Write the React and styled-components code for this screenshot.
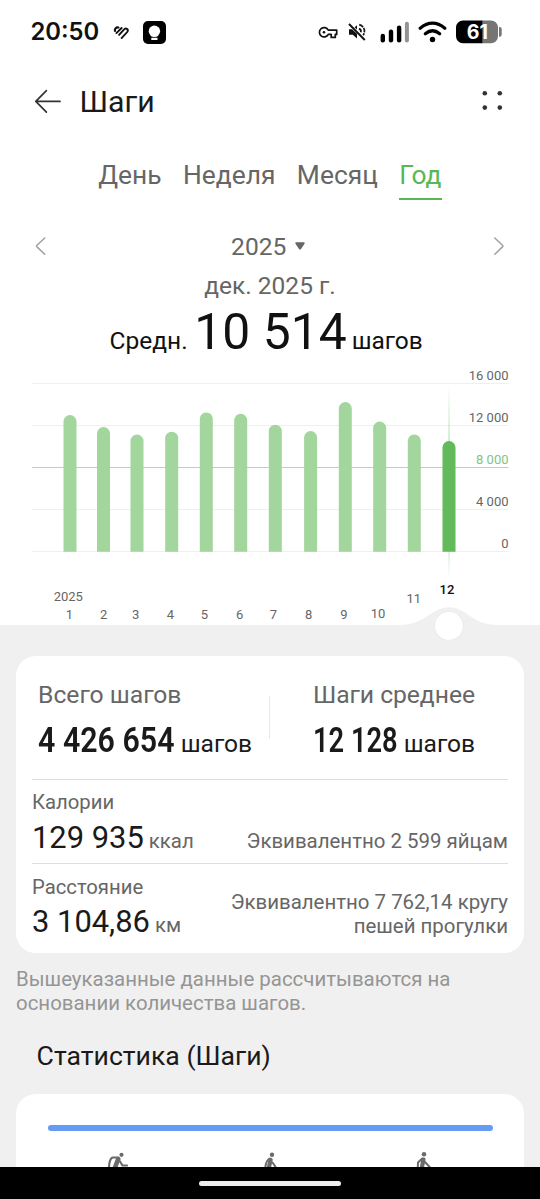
import React from "react";
import styled, { createGlobalStyle } from "styled-components";

const GlobalStyle = createGlobalStyle`
  * {
    box-sizing: border-box;
  }
  body {
    margin: 0;
    background: #f0f0f0;
    font-family: Roboto, "Noto Sans", sans-serif;
  }
`;

const Screen = styled.div`
  display: flex;
  flex-direction: column;
  width: 540px;
  height: 1199px;
  overflow: hidden;
  background: #f0f0f0;
`;

const Content = styled.div`
  flex: 1;
  min-height: 0;
  overflow: hidden;
`;

const TopPanel = styled.div`
  background: #fff;
`;

const StatusBar = styled.div`
  display: flex;
  align-items: center;
  height: 64px;
  padding: 0 38px 0 30.5px;
`;

const Clock = styled.span`
  width: 82px;
  font: 600 23.8px/30px Inter, sans-serif;
  color: #111;
`;

const StatusIcons = styled.div`
  display: flex;
  align-items: center;
  margin-left: auto;
`;

const StatusIcon = styled.svg`
  display: block;
  flex: none;
  margin-left: ${(p) => p.$gap || 0}px;
`;

const TitleBar = styled.div`
  display: flex;
  align-items: center;
  height: 76px;
  padding: 0 36px 0 34px;
`;

const Title = styled.h1`
  margin: 0 auto 0 17.5px;
  font-size: 30.3px;
  font-weight: 400;
  line-height: 40px;
  color: #1a1a1a;
`;

const Tabs = styled.div`
  display: flex;
  gap: 21.4px;
  height: 61px;
  padding: 19px 0 0 98.2px;
`;

const Tab = styled.div`
  height: 41px;
  font-size: 26.4px;
  line-height: 32px;
  color: ${(p) => (p.$active ? "#59b853" : "#666")};
  border-bottom: ${(p) => (p.$active ? "2px solid #59b853" : "none")};
`;

const YearRow = styled.div`
  display: flex;
  align-items: center;
  justify-content: space-between;
  height: 44px;
  margin-top: 24px;
  padding: 0 35px;
`;

const Year = styled.div`
  display: flex;
  align-items: center;
  gap: 9px;
  margin: 0 3.5px 1px 0;
  font-size: 24.6px;
  color: #666;
`;

const Period = styled.div`
  font-size: 24.5px;
  line-height: 34px;
  text-align: center;
  color: #666;
`;

const Average = styled.div`
  display: flex;
  align-items: baseline;
  height: 57px;
  padding-left: 109.6px;
  font-size: 24.5px;
  line-height: 58px;
  color: #111;
`;

const AverageValue = styled.span`
  margin: 0 5px 0 6.7px;
  font-size: 49.8px;
`;

const ChartSvg = styled.svg`
  display: block;
  text {
    font-family: Roboto, sans-serif;
    font-size: 13px;
    fill: #666;
  }
`;

const Card = styled.div`
  margin: 16px 16px 0;
  padding: 0 16px;
  height: ${(p) => p.$height}px;
  background: #fff;
  border-radius: 20px;
`;

const Totals = styled.div`
  display: flex;
  height: 124px;
  padding-top: 24px;
  border-bottom: 1px solid #dedede;
`;

const Total = styled.div`
  width: ${(p) => p.$width}px;
  padding-left: 6px;
`;

const TotalLabel = styled.div`
  font-size: 24.7px;
  line-height: 30px;
  letter-spacing: ${(p) => p.$spacing || 0}px;
  color: #666;
`;

const TotalValue = styled.div`
  display: flex;
  align-items: baseline;
  margin-top: 7.5px;
  font-size: 24.6px;
  line-height: 44px;
  color: #1a1a1a;
`;

const Condensed = styled.span`
  display: block;
  width: ${(p) => p.$width}px;
  font-size: 34.5px;
  font-weight: 600;
  white-space: nowrap;
  transform: scaleX(${(p) => p.$scale});
  transform-origin: left;
`;

const Separator = styled.div`
  width: 1px;
  height: 43px;
  margin: 16px 37px 0 0;
  background: #e8e8e8;
`;

const MetricRow = styled.div`
  display: flex;
  justify-content: space-between;
  align-items: flex-end;
  height: 84px;
  padding-bottom: ${(p) => (p.$last ? 8 : 7.5)}px;
  border-bottom: ${(p) => (p.$last ? "none" : "1px solid #dedede")};
`;

const MetricLabel = styled.div`
  margin-bottom: 5.5px;
  font-size: 20.3px;
  line-height: 24px;
  color: #666;
`;

const MetricValue = styled.div`
  display: flex;
  align-items: baseline;
  height: 36px;
  font-size: 30.9px;
  line-height: 36px;
  color: #1a1a1a;
`;

const Unit = styled.span`
  margin-left: 5px;
  font-size: 20.4px;
  color: #666;
`;

const Equivalent = styled.div`
  padding-bottom: 2.4px;
  font-size: 20.45px;
  line-height: 24px;
  text-align: right;
  color: #666;
`;

const Note = styled.p`
  margin: 14px 16px 0;
  font-size: 20.45px;
  line-height: 24px;
  color: #959595;
`;

const SectionTitle = styled.h2`
  margin: 25px 0 21.5px 36.6px;
  font-size: 26.6px;
  font-weight: 400;
  line-height: 32px;
  color: #1a1a1a;
`;

const ProgressCard = styled(Card)`
  padding-top: 31.5px;
`;

const ProgressBar = styled.div`
  height: 5.5px;
  margin: 0 15.5px;
  border-radius: 3px;
  background: #659bf5;
`;

const Walkers = styled.div`
  display: flex;
  justify-content: space-between;
  padding: 20px 69px 0 70px;
`;

const NavBar = styled.div`
  display: flex;
  justify-content: center;
  height: 32px;
  padding-top: 14px;
  background: #000;
`;

const NavPill = styled.div`
  width: 142px;
  height: 5px;
  border-radius: 3px;
  background: #ededed;
`;

const months = [
  { label: "1", x: 70, top: 415, lx: 69.3 },
  { label: "2", x: 103.5, top: 427, lx: 103.7 },
  { label: "3", x: 137, top: 434.5, lx: 135.7 },
  { label: "4", x: 171.7, top: 431.7, lx: 170.3 },
  { label: "5", x: 206.3, top: 412.4, lx: 204.3 },
  { label: "6", x: 240.7, top: 413.8, lx: 239.7 },
  { label: "7", x: 275.3, top: 424.7, lx: 273.5 },
  { label: "8", x: 310.6, top: 431, lx: 308.7 },
  { label: "9", x: 345.3, top: 402, lx: 344 },
  { label: "10", x: 379.7, top: 421.6, lx: 378, ly: 618 },
  { label: "11", x: 414.3, top: 434.4, lx: 413.7, ly: 603.4 },
  { label: "12", x: 449, top: 441, lx: 447, ly: 594, active: true },
];

const levels = [
  { label: "16 000", y: 383.5 },
  { label: "12 000", y: 425.5 },
  { label: "8 000", y: 467.5, goal: true },
  { label: "4 000", y: 509.5 },
  { label: "0", y: 551.5 },
];

function barPath(x, top) {
  const l = x - 6.5;
  const r = x + 6.5;
  return `M${l} 551.8V${top + 6.5}A6.5 6.5 0 0 1 ${r} ${top + 6.5}V551.8Z`;
}

function StepsChart() {
  return (
    <ChartSvg width="540" height="280" viewBox="0 360 540 280">
      <defs>
        <linearGradient id="marker" x1="0" y1="0" x2="0" y2="1">
          <stop offset="0" stopColor="#5fba59" stopOpacity="0" />
          <stop offset="0.35" stopColor="#5fba59" stopOpacity="0.4" />
          <stop offset="0.75" stopColor="#5fba59" stopOpacity="0.4" />
          <stop offset="1" stopColor="#5fba59" stopOpacity="0" />
        </linearGradient>
        <filter id="knobShadow" x="-30%" y="-30%" width="160%" height="160%">
          <feDropShadow dx="0" dy="0.5" stdDeviation="1" floodOpacity="0.06" />
        </filter>
      </defs>
      {levels.map((l) => (
        <g key={l.label}>
          <path d={`M32 ${l.y}H508.5`} stroke={l.goal ? "#b3d8b0" : "#efefef"} />
          <text x="508.5" y={l.y - 3.8} textAnchor="end" style={l.goal ? { fill: "#85c281" } : null}>
            {l.label}
          </text>
        </g>
      ))}
      <rect x="448.2" y="384" width="1.6" height="196" fill="url(#marker)" />
      {months.map((m) => (
        <path key={m.label} d={barPath(m.x, m.top)} fill={m.active ? "#62ba5b" : "#a2d69d"} />
      ))}
      <text x="68.3" y="601" textAnchor="middle">2025</text>
      {months.map((m) => (
        <text
          key={m.label}
          x={m.lx}
          y={m.ly || 619}
          textAnchor="middle"
          style={m.active ? { fill: "#111", fontWeight: 500 } : null}
        >
          {m.label}
        </text>
      ))}
      <path
        d="M0 625H400C426 625 431 607.3 449 607.3S471 625 498 625H540V640H0Z"
        fill="#f0f0f0"
      />
      <circle cx="448.9" cy="626" r="13.9" fill="#fff" filter="url(#knobShadow)" />
    </ChartSvg>
  );
}

function StatusLeft() {
  return (
    <>
      <StatusIcon width="17" height="15" viewBox="0 0 17 15" fill="none" stroke="#111" strokeWidth="1.9" strokeLinecap="round">
        <path d="M2 6C1.4 3.8 3.2 2 5.4 2.5" strokeWidth="2.2" />
        <path d="M3.4 8.1 8.6 3" />
        <path d="M6.1 9.9 10.9 4.6C12.7 2.3 15.9 4.2 14.4 6.8L8.6 13.1" />
      </StatusIcon>
      <StatusIcon $gap={13.5} width="23" height="23" viewBox="0 0 23 23">
        <rect width="23" height="23" rx="5" fill="#000" />
        <circle cx="11.4" cy="10.2" r="5.7" fill="#fff" />
        <path d="M8.3 13h6.2v2.4H8.3zM8.3 16.7h6.2v2.2H8.3z" fill="#fff" />
      </StatusIcon>
    </>
  );
}

function StatusRight() {
  return (
    <StatusIcons>
      <StatusIcon width="20" height="13" viewBox="0 0 20 13" fill="none" stroke="#111" strokeWidth="1.7">
        <path d="M10.3 4.1H18.7V8.4H17.3V11.4H13.2V8.4H10.3A4.7 4.7 0 1 1 10.3 4.1Z" strokeLinejoin="round" />
        <circle cx="6" cy="6.3" r="1.3" fill="#111" stroke="none" />
      </StatusIcon>
      <StatusIcon $gap={10} width="18" height="18" viewBox="0 0 18 18" fill="none" stroke="#111" strokeWidth="1.7">
        <path d="M1 6.3H4L9 10.8V15.6L4.8 11.8H1Z" fill="#111" stroke="none" />
        <path d="M6.6 4.3 9 2.3V6.5Z" fill="#111" stroke="none" />
        <path d="M1 1 16.8 17" strokeWidth="1.9" />
        <path d="M11.2 1.6C16 3 18 8 15.2 12.2" strokeDasharray="4.6 1" />
        <path d="M11 5.6C12.6 6.3 13.2 7.7 12.8 9.2" />
      </StatusIcon>
      <StatusIcon $gap={14} width="29" height="22" viewBox="0 0 29 22">
        <rect x="0.6" y="12.8" width="4.4" height="8.7" rx="2.2" fill="#000" />
        <rect x="8.8" y="8.5" width="4.4" height="13" rx="2.2" fill="#000" />
        <rect x="16.9" y="4.5" width="4.4" height="17" rx="2.2" fill="#000" />
        <rect x="24.9" y="0.8" width="4" height="20.7" rx="2" fill="#949494" />
      </StatusIcon>
      <StatusIcon $gap={9} width="29" height="22" viewBox="0 0 29 22" fill="none" stroke="#000" strokeWidth="3.2" strokeLinecap="round">
        <path d="M2.2 7.2Q14.5-2.8 26.8 7.2" />
        <path d="M7.3 12.7Q14.5 6.8 21.7 12.7" />
        <circle cx="14.5" cy="18.5" r="2.7" fill="#000" stroke="none" />
      </StatusIcon>
      <StatusIcon $gap={9} width="46" height="24" viewBox="0 0 46 24">
        <path d="M26 0.5H35A7 7 0 0 1 42 7.5V16.3A7 7 0 0 1 35 23.3H26Z" fill="#757575" />
        <path d="M26.3 0.5H7A7 7 0 0 0 0 7.5V16.3A7 7 0 0 0 7 23.3H26.3Z" fill="#000" />
        <path d="M43 7H43.5A2.2 2.2 0 0 1 45.7 9.2V14.6A2.2 2.2 0 0 1 43.5 16.8H43Z" fill="#757575" />
        <text x="21.3" y="19" textAnchor="middle" fontFamily="Inter" fontSize="19.6" fontWeight="700" fill="#fff">
          61
        </text>
      </StatusIcon>
    </StatusIcons>
  );
}

export default function App() {
  return (
    <Screen>
      <GlobalStyle />
      <Content>
        <TopPanel>
          <StatusBar>
            <Clock>20:50</Clock>
            <StatusLeft />
            <StatusRight />
          </StatusBar>
          <TitleBar>
            <svg width="28" height="26" viewBox="0 0 28 26" fill="none" stroke="#333" strokeWidth="1.7" strokeLinecap="round" strokeLinejoin="round">
              <path d="M12.4 1.6 1.8 12.4 12.4 23.2M1.8 12.4H26" />
            </svg>
            <Title>Шаги</Title>
            <svg width="22" height="22" viewBox="0 0 22 22" fill="#333">
              <circle cx="2.8" cy="2.3" r="2.3" />
              <circle cx="17.8" cy="2.3" r="2.3" />
              <circle cx="2.8" cy="16.6" r="2.3" />
              <circle cx="17.8" cy="16.6" r="2.3" />
            </svg>
          </TitleBar>
          <Tabs>
            <Tab>День</Tab>
            <Tab>Неделя</Tab>
            <Tab>Месяц</Tab>
            <Tab $active>Год</Tab>
          </Tabs>
          <YearRow>
            <svg width="12" height="20" viewBox="0 0 12 20" fill="none" stroke="#a0a0a0" strokeWidth="1.5" strokeLinecap="round">
              <path d="M9.7 1 2 8.3Q1.2 9.1 2 9.9L9.7 17.2" />
            </svg>
            <Year>
              2025
              <svg width="10" height="12" viewBox="0 0 10 12" fill="#666">
                <path d="M1.2 1.2H8.8Q10.2 1.4 9.5 2.8L6 8Q5 9.2 4 8L0.5 2.8Q-0.2 1.4 1.2 1.2Z" />
              </svg>
            </Year>
            <svg width="12" height="20" viewBox="0 0 12 20" fill="none" stroke="#a0a0a0" strokeWidth="1.5" strokeLinecap="round">
              <path d="M1.8 1 9.5 8.3Q10.3 9.1 9.5 9.9L1.8 17.2" />
            </svg>
          </YearRow>
          <Period>дек. 2025 г.</Period>
          <Average>
            Средн.
            <AverageValue>10 514</AverageValue>
            шагов
          </Average>
          <StepsChart />
        </TopPanel>
        <Card $height={297}>
          <Totals>
            <Total $width={237}>
              <TotalLabel>Всего шагов</TotalLabel>
              <TotalValue>
                <Condensed $width={142.7} $scale={0.88}>4 426 654</Condensed>
                шагов
              </TotalValue>
            </Total>
            <Separator />
            <Total $width={200}>
              <TotalLabel $spacing={-0.05}>Шаги среднее</TotalLabel>
              <TotalValue>
                <Condensed $width={90.7} $scale={0.79}>12 128</Condensed>
                шагов
              </TotalValue>
            </Total>
          </Totals>
          <MetricRow>
            <div>
              <MetricLabel>Калории</MetricLabel>
              <MetricValue>
                129 935
                <Unit>ккал</Unit>
              </MetricValue>
            </div>
            <Equivalent>Эквивалентно 2 599 яйцам</Equivalent>
          </MetricRow>
          <MetricRow $last>
            <div>
              <MetricLabel>Расстояние</MetricLabel>
              <MetricValue>
                3 104,86
                <Unit>км</Unit>
              </MetricValue>
            </div>
            <Equivalent>
              Эквивалентно 7 762,14 кругу
              <br />
              пешей прогулки
            </Equivalent>
          </MetricRow>
        </Card>
        <Note>
          Вышеуказанные данные рассчитываются на
          <br />
          основании количества шагов.
        </Note>
        <SectionTitle>Статистика (Шаги)</SectionTitle>
        <ProgressCard $height={120}>
          <ProgressBar />
          <Walkers>
            <svg width="32" height="24" viewBox="0 0 32 24" fill="none" stroke="#6b6b6b" strokeWidth="2.2" strokeLinecap="round">
              <circle cx="19.5" cy="3.8" r="2.1" fill="#6b6b6b" stroke="none" />
              <path d="M16 6.5H10.5Q7.4 8 7 16" />
              <path d="M16.2 8 12.8 17" strokeWidth="4.6" />
              <path d="M18 10.5 20.5 14.5H25" />
            </svg>
            <svg width="32" height="24" viewBox="0 0 32 24" fill="none" stroke="#6b6b6b" strokeWidth="2" strokeLinecap="round">
              <circle cx="17" cy="3.8" r="2.2" fill="#6b6b6b" stroke="none" />
              <path d="M14.6 7.5Q10.8 10 10.4 16" />
              <path d="M15.6 8.8 13.8 17" strokeWidth="4.2" />
              <path d="M17.5 11.5 20.6 16" />
            </svg>
            <svg width="32" height="24" viewBox="0 0 32 24" fill="none" stroke="#6b6b6b" strokeWidth="2" strokeLinecap="round">
              <circle cx="17" cy="3.2" r="2.3" fill="#6b6b6b" stroke="none" />
              <path d="M15.2 7.5 11 11.5 10.8 16" />
              <path d="M16.4 8.6 14.8 17" strokeWidth="4.2" />
              <path d="M18 11 22.6 16" />
            </svg>
          </Walkers>
        </ProgressCard>
      </Content>
      <NavBar>
        <NavPill />
      </NavBar>
    </Screen>
  );
}
